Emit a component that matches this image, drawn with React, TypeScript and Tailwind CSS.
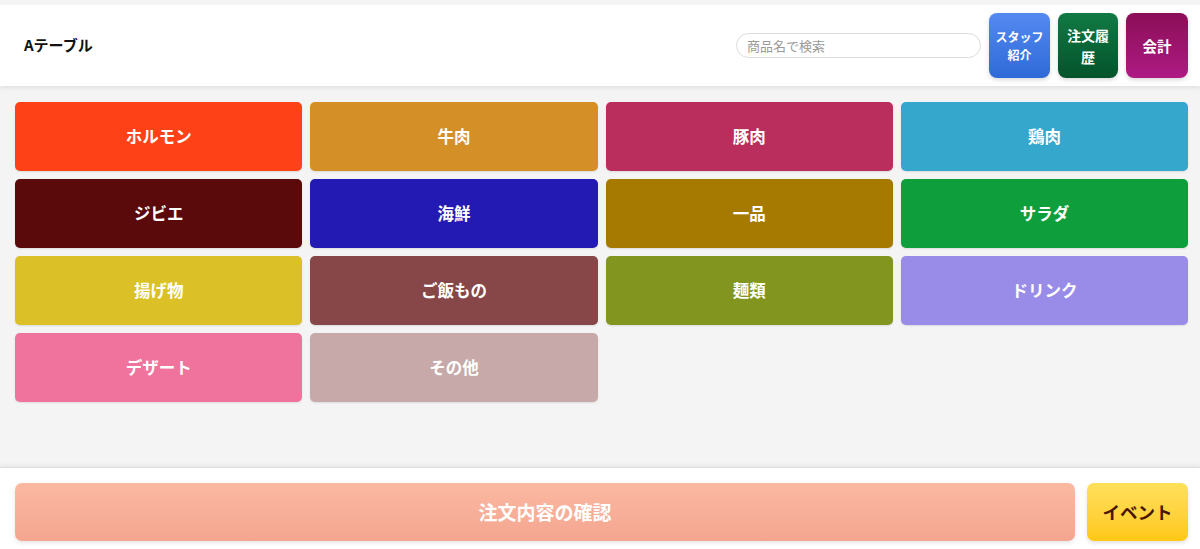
import React from "react";

const cats: { name: string; cls: string }[] = [
  { name: "ホルモン", cls: "bg-[#ff4118]" },
  { name: "牛肉", cls: "bg-[#d48f26]" },
  { name: "豚肉", cls: "bg-[#b92e5c]" },
  { name: "鶏肉", cls: "bg-[#35a6cc]" },
  { name: "ジビエ", cls: "bg-[#5a0a0b]" },
  { name: "海鮮", cls: "bg-[#231ab3]" },
  { name: "一品", cls: "bg-[#a67a00]" },
  { name: "サラダ", cls: "bg-[#0e9f3c]" },
  { name: "揚げ物", cls: "bg-[#dbc127]" },
  { name: "ご飯もの", cls: "bg-[#874648]" },
  { name: "麺類", cls: "bg-[#82951f]" },
  { name: "ドリンク", cls: "bg-[#998ce9]" },
  { name: "デザート", cls: "bg-[#ef739d]" },
  { name: "その他", cls: "bg-[#c8a9aa]" },
];

export default function App() {
  return (
    <div
      className="w-[1200px] h-[549px] flex flex-col bg-[#f4f4f4] overflow-hidden"
      style={{ fontFamily: '"Noto Sans CJK JP", "Noto Sans", sans-serif' }}
    >
      <div className="h-[5px] shrink-0" />
      <header className="h-[81px] shrink-0 bg-white flex items-center pl-[24px] pr-[12px] shadow-[0_2px_4px_rgba(0,0,0,0.08)] relative z-10">
        <div className="text-[15px] font-bold text-[#111]">Aテーブル</div>
        <div className="flex-1" />
        <input
          className="w-[245px] h-[25px] rounded-full border border-[#dcdcdc] px-[10px] text-[13px] text-[#333] placeholder:text-[#9a9a9a] outline-none mr-[8px]"
          placeholder="商品名で検索"
        />
        <div className="flex gap-[8px]">
          <button className="w-[61px] h-[65px] rounded-[8px] bg-gradient-to-b from-[#5489f0] to-[#2e6ad8] text-white font-bold text-[12px] leading-[18px] shadow-[0_2px_4px_rgba(0,0,0,0.15)]">
            スタッフ<br />紹介
          </button>
          <button className="w-[60px] h-[65px] rounded-[8px] bg-gradient-to-b from-[#117a44] to-[#04532b] text-white font-bold text-[14px] leading-[22px] shadow-[0_2px_4px_rgba(0,0,0,0.15)]">
            注文履<br />歴
          </button>
          <button className="w-[62px] h-[65px] rounded-[8px] bg-gradient-to-b from-[#8c0e57] to-[#ad1a84] text-white font-bold text-[14.5px] shadow-[0_2px_4px_rgba(0,0,0,0.15)]">
            会計
          </button>
        </div>
      </header>
      <main className="flex-1 pt-[16px] pl-[15px] pr-[12px]">
        <div className="grid grid-cols-4 gap-[8px]">
          {cats.map((c) => (
            <button
              key={c.name}
              className={`${c.cls} h-[69px] rounded-[5px] text-white font-bold text-[16.5px] shadow-[0_1px_2px_rgba(0,0,0,0.1)]`}
            >
              {c.name}
            </button>
          ))}
        </div>
      </main>
      <footer className="h-[82px] shrink-0 bg-white border-t border-[#dedede] shadow-[0_-2px_4px_rgba(0,0,0,0.05)] flex gap-[12px] pt-[15px] pb-[8px] pl-[15px] pr-[12px]">
        <button className="flex-1 h-[58px] rounded-[7px] bg-gradient-to-b from-[#fbb9a1] to-[#f4a590] text-white font-bold text-[19px] shadow-[0_2px_4px_rgba(0,0,0,0.1)]">
          注文内容の確認
        </button>
        <button className="w-[101px] h-[58px] rounded-[7px] bg-gradient-to-b from-[#ffe05a] to-[#ffc812] text-[#4a1500] font-bold text-[17.5px] shadow-[0_2px_4px_rgba(0,0,0,0.12)]">
          イベント
        </button>
      </footer>
    </div>
  );
}
